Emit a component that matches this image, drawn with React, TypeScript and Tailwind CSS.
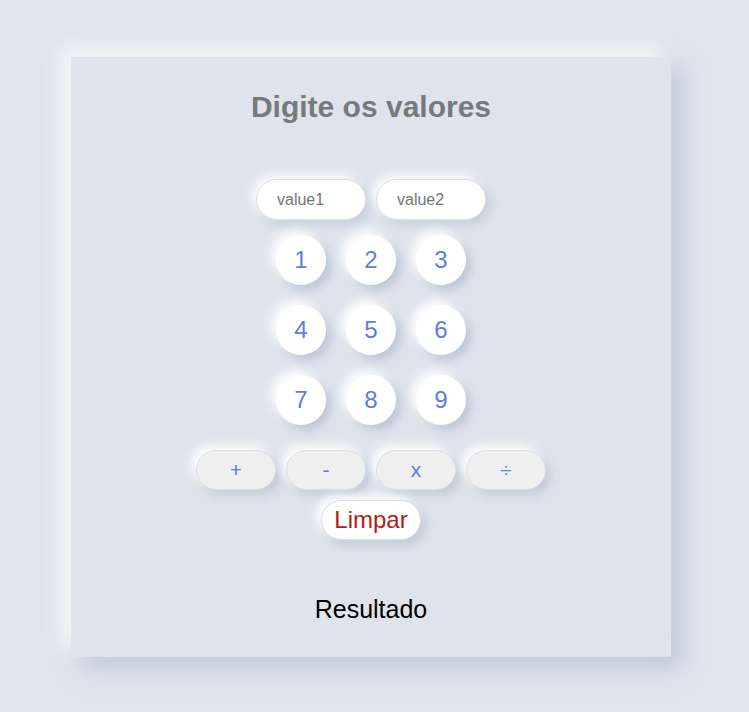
const digits = [
    ["1", "2", "3"],
    ["4", "5", "6"],
    ["7", "8", "9"],
];

const ops = ["+", "-", "x", "÷"];

export default function App() {
    return (
        <div className="min-h-[712px] bg-[#e0e5ec] pt-[57px] pl-[71px] font-['Liberation_Sans',Arial,sans-serif]">
            {/* Card */}
            <div className="flex h-[600px] w-[600px] flex-col items-center bg-[#dfe4ec] pt-[33px] shadow-[-10px_-10px_20px_rgba(255,255,255,0.7),10px_10px_20px_rgba(163,177,198,0.6)]">
                <h1 className="text-[30px] font-bold leading-[34px] text-[#777a7d]">Digite os valores</h1>

                {/* Inputs */}
                <div className="mt-[55px] flex gap-[10px]">
                    <input
                        placeholder="value1"
                        className="h-[41px] w-[110px] rounded-full border border-[#dcdcdc] bg-white pl-[20px] text-[16px] text-[#555] placeholder:text-[#757575] shadow-[-4px_-4px_10px_rgba(255,255,255,0.9),4px_4px_10px_rgba(163,177,198,0.5)] outline-none"
                    />
                    <input
                        placeholder="value2"
                        className="h-[41px] w-[110px] rounded-full border border-[#dcdcdc] bg-white pl-[20px] text-[16px] text-[#555] placeholder:text-[#757575] shadow-[-4px_-4px_10px_rgba(255,255,255,0.9),4px_4px_10px_rgba(163,177,198,0.5)] outline-none"
                    />
                </div>

                {/* Digits */}
                <div className="mt-[15px] flex flex-col gap-[20px]">
                    {digits.map((row, i) => (
                        <div key={i} className="flex gap-[20px]">
                            {row.map((d) => (
                                <button
                                    key={d}
                                    className="flex h-[50px] w-[50px] items-center justify-center rounded-full bg-white text-[24px] text-[#5b7de6] shadow-[-5px_-5px_10px_rgba(255,255,255,0.9),5px_5px_10px_rgba(163,177,198,0.6)]"
                                >
                                    {d}
                                </button>
                            ))}
                        </div>
                    ))}
                </div>

                {/* Operators */}
                <div className="mt-[25px] flex gap-[10px]">
                    {ops.map((o) => (
                        <button
                            key={o}
                            className="flex h-[40px] w-[80px] items-center justify-center rounded-full border border-[#dadde2] bg-[#efefef] text-[21px] text-[#5b7de6] shadow-[-5px_-5px_10px_rgba(255,255,255,0.9),5px_5px_10px_rgba(163,177,198,0.5)]"
                        >
                            {o}
                        </button>
                    ))}
                </div>

                <button className="mt-[10px] flex h-[40px] w-[100px] items-center justify-center rounded-full border border-[#dcdcdc] bg-white text-[24px] text-[#b31b1b] shadow-[-5px_-5px_10px_rgba(255,255,255,0.9),5px_5px_10px_rgba(163,177,198,0.5)]">
                    Limpar
                </button>

                <p className="mt-[55px] text-[25px] leading-[28px] text-black">Resultado</p>
            </div>
        </div>
    );
}
